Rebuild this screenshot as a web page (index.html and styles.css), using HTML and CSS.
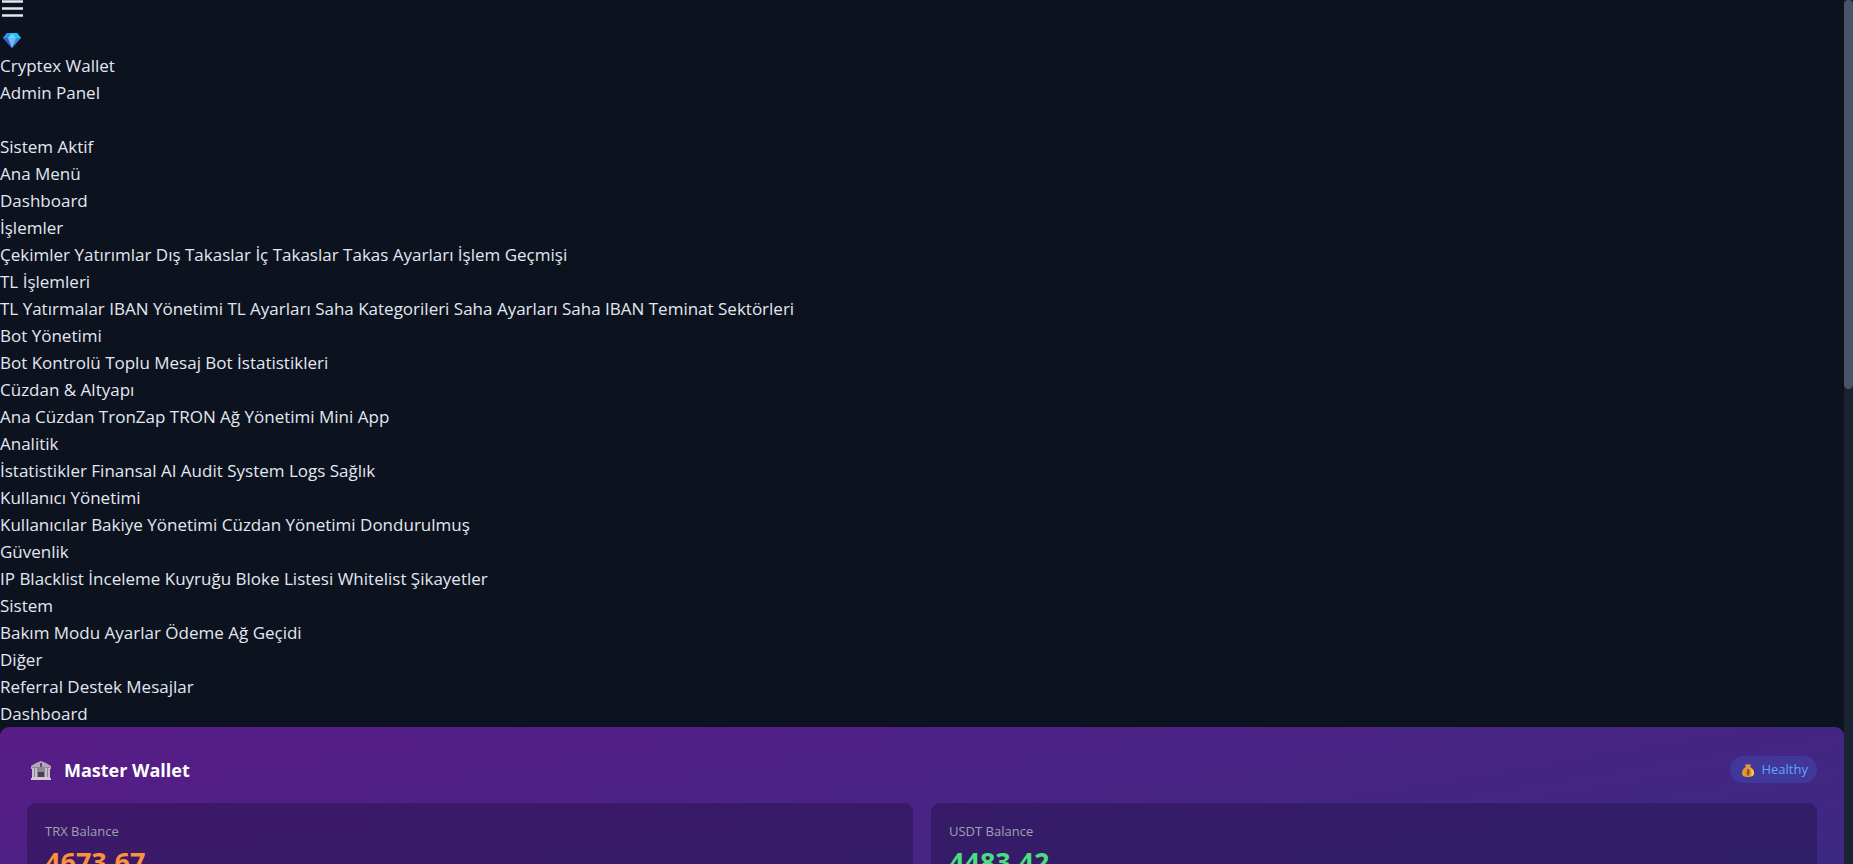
FILE: index.html
```html
<!DOCTYPE html>
<html lang="tr">

<head>
    <meta charset="UTF-8">
    <meta name="viewport" content="width=device-width, initial-scale=1.0">
    <title>Cryptex Wallet - Admin Panel</title>
    <link rel="stylesheet" href="styles.css">
</head>

<body>

    <div class="content">

        <button type="button" class="menu-btn" aria-label="Menü">
            <svg class="menu-icon" viewBox="0 0 25 25" aria-hidden="true">
                <path d="M2 1.5h21M2 8.5h21M2 15.5h21" />
            </svg>
        </button>

        <!-- Menü -->
        <aside class="sidebar">
            <div class="logo">
                <svg class="logo-icon" viewBox="0 0 24 27" aria-hidden="true">
                    <path fill="#2f8fe0" d="M7 8h10l4 5-9 10-9-10z" />
                    <path fill="#22c8f5" d="M12 8h5l4 5h-5z" />
                    <path fill="#2f93e6" d="M7 8h5l-4 5H3z" />
                    <path fill="#5cd8fb" d="M12 8l4 5H8z" />
                    <path fill="#2763c9" d="M3 13h5l4 10z" />
                    <path fill="#7cb4f5" d="M8 13h8l-4 10z" />
                </svg>
            </div>
            <div>Cryptex Wallet</div>
            <div>Admin Panel</div>
            <div class="status-dot"></div>
            <div>Sistem Aktif</div>

            <nav>
                <div>Ana Menü</div>
                <a href="#">Dashboard</a>
                <div>İşlemler</div>
                <a href="#">Çekimler</a>
                <a href="#">Yatırımlar</a>
                <a href="#">Dış Takaslar</a>
                <a href="#">İç Takaslar</a>
                <a href="#">Takas Ayarları</a>
                <a href="#">İşlem Geçmişi</a>
                <div>TL İşlemleri</div>
                <a href="#">TL Yatırmalar</a>
                <a href="#">IBAN Yönetimi</a>
                <a href="#">TL Ayarları</a>
                <a href="#">Saha Kategorileri</a>
                <a href="#">Saha Ayarları</a>
                <a href="#">Saha IBAN</a>
                <a href="#">Teminat Sektörleri</a>
                <div>Bot Yönetimi</div>
                <a href="#">Bot Kontrolü</a>
                <a href="#">Toplu Mesaj</a>
                <a href="#">Bot İstatistikleri</a>
                <div>Cüzdan &amp; Altyapı</div>
                <a href="#">Ana Cüzdan</a>
                <a href="#">TronZap</a>
                <a href="#">TRON Ağ Yönetimi</a>
                <a href="#">Mini App</a>
                <div>Analitik</div>
                <a href="#">İstatistikler</a>
                <a href="#">Finansal</a>
                <a href="#">AI Audit</a>
                <a href="#">System Logs</a>
                <a href="#">Sağlık</a>
                <div>Kullanıcı Yönetimi</div>
                <a href="#">Kullanıcılar</a>
                <a href="#">Bakiye Yönetimi</a>
                <a href="#">Cüzdan Yönetimi</a>
                <a href="#">Dondurulmuş</a>
                <div>Güvenlik</div>
                <a href="#">IP Blacklist</a>
                <a href="#">İnceleme Kuyruğu</a>
                <a href="#">Bloke Listesi</a>
                <a href="#">Whitelist</a>
                <a href="#">Şikayetler</a>
                <div>Sistem</div>
                <a href="#">Bakım Modu</a>
                <a href="#">Ayarlar</a>
                <a href="#">Ödeme Ağ Geçidi</a>
                <div>Diğer</div>
                <a href="#">Referral</a>
                <a href="#">Destek</a>
                <a href="#">Mesajlar</a>
            </nav>
        </aside>

        <main>
            <h1 class="page-title">Dashboard</h1>

            <!-- Ana cüzdan -->
            <section class="wallet-card">
                <div class="wallet-header">
                    <h2 class="wallet-title">
                        <svg class="bank-icon" viewBox="0 0 27 24" aria-hidden="true">
                            <path fill="#b0a8b5" d="M14 2l5 2 5 3v3H4V7l5-3z" />
                            <path fill="#8f8698" d="M5 8h18v10H5z" />
                            <path fill="#c6bfc9" d="M5 9h2v9H5zM8 9h2v9H8zM18 9h2v9h-2zM21 9h2v9h-2z" />
                            <path fill="#4a4051" d="M11 13h6v5h-6z" />
                            <path fill="#5d4a78" d="M13 4h2v4h-2z" />
                            <path fill="#cfc8d1" d="M5 18h18v1h1v2H4v-2h1z" />
                        </svg>
                        Master Wallet
                    </h2>
                    <span class="badge">
                        <svg class="bag-icon" viewBox="0 0 18 18" aria-hidden="true">
                            <path fill="#e8963a" d="M8 3l1 1 1-1 2 1-1 2c3 1 4 4 4 6 0 3-2 4-6 4s-6-1-6-4c0-2 1-5 4-6L6 4z" />
                            <path fill="#f8c557" d="M11 7c3 1 4 3 4 5 0 2-1 3-3 3 1-3 1-5-1-8z" />
                            <path fill="none" stroke="#7a4a22" d="M8 9h2v2H8v2h2v-2M9 8v7" />
                        </svg>
                        Healthy
                    </span>
                </div>
                <div class="balance-grid">
                    <div class="balance-box">
                        <div class="balance-label">TRX Balance</div>
                        <div class="balance-value trx">4673.67</div>
                    </div>
                    <div class="balance-box">
                        <div class="balance-label">USDT Balance</div>
                        <div class="balance-value usdt">4483.42</div>
                    </div>
                </div>
            </section>
        </main>

    </div>

    <div class="scrollbar" aria-hidden="true">
        <div class="scrollbar-thumb"></div>
    </div>

</body>

</html>
```
FILE: styles.css
```css
* {
    box-sizing: border-box;
    margin: 0;
    padding: 0;
}

body {
    display: flex;
    height: 100vh;
    overflow: hidden;
    font-family: "Segoe UI", "Open Sans", sans-serif;
    font-size: 17px;
    line-height: 27px;
    color: #e2e8f0;
    background-color: #0c121e;
}

a {
    color: inherit;
    text-decoration: none;
}

.content {
    flex: 1;
    overflow: hidden;
}

.menu-btn {
    display: block;
    border: none;
    background: none;
    color: inherit;
    cursor: pointer;
}

.menu-icon {
    display: block;
    width: 25px;
    height: 25px;
    fill: none;
    stroke: currentColor;
    stroke-width: 2.5;
}

.logo {
    height: 27px;
}

.logo-icon {
    display: block;
    width: 24px;
    height: 27px;
}

.status-dot {
    height: 27px;
}

.page-title {
    font-size: 17px;
    font-weight: normal;
}

/* Kart */
.wallet-card {
    min-height: 300px;
    padding: 27px;
    border-radius: 9px;
    background: linear-gradient(to bottom right, #581c87, #312e81);
}

.wallet-header {
    display: flex;
    justify-content: space-between;
    align-items: flex-start;
    margin-bottom: 16px;
}

.wallet-title {
    display: flex;
    align-items: center;
    gap: 10px;
    font-size: 18px;
    line-height: 33px;
    color: #fff;
}

.bank-icon {
    width: 27px;
    height: 24px;
}

.badge {
    display: flex;
    align-items: center;
    gap: 4px;
    margin-top: 2px;
    padding: 0 9px;
    border-radius: 14px;
    font-size: 13px;
    color: #60a5fa;
    background-color: rgba(59, 130, 246, 0.2);
}

.bag-icon {
    width: 18px;
    height: 18px;
}

.balance-grid {
    display: grid;
    grid-template-columns: 1fr 1fr;
    gap: 18px;
}

.balance-box {
    padding: 18px;
    border-radius: 9px;
    background-color: rgba(15, 10, 40, 0.3);
}

.balance-label {
    font-size: 13px;
    line-height: 20px;
    color: #9ca3af;
}

.balance-value {
    font-size: 27px;
    font-weight: bold;
    line-height: 42px;
}

.trx {
    color: #fb923c;
}

.usdt {
    color: #4ade80;
}

/* Kaydırma çubuğu */
.scrollbar {
    width: 9px;
    background-color: #1a2332;
}

.scrollbar-thumb {
    height: 45%;
    border-radius: 5px;
    background-color: #475569;
}
```
